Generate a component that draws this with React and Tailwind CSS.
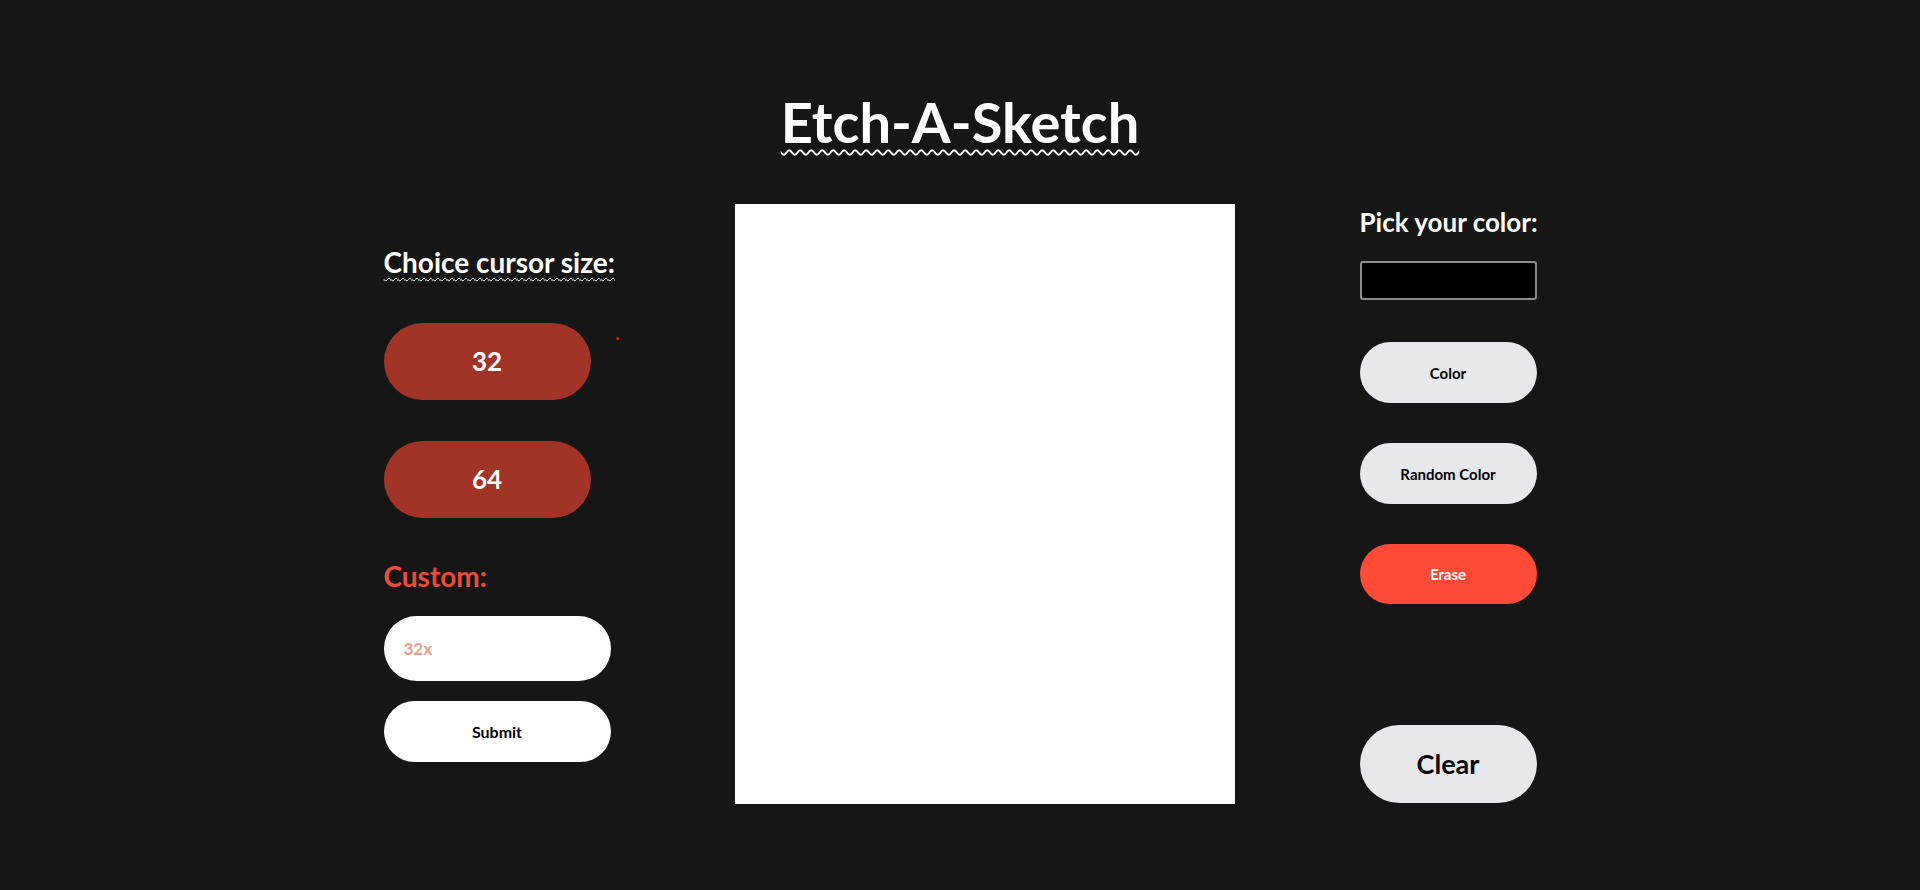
import React, { useState } from 'react';

const font = { fontFamily: 'Lato, "Open Sans", sans-serif' };

export default function App() {
  const [custom, setCustom] = useState('');

  return (
    <div className="min-h-screen bg-[#161616] flex flex-col items-center text-white" style={font}>
      <h1 className="mt-[88px] text-[56px] font-bold leading-[1.2] underline decoration-wavy decoration-white decoration-2 underline-offset-[6px]">
        Etch-A-Sketch
      </h1>

      <div className="mt-[46px] flex items-start justify-center">
        {/* Left controls */}
        <div className="relative w-[227px] pt-[45px] flex flex-col">
          <h2 className="text-[28px] font-bold leading-[1.2] underline decoration-wavy decoration-white decoration-1 underline-offset-[4px] whitespace-nowrap">
            Choice cursor size:
          </h2>
          <span className="absolute left-[232px] top-[136px] h-[3px] w-[3px] rounded-full bg-[#e0241b]" />
          <button className="mt-[43px] h-[77px] w-[207px] rounded-full bg-[#a23327] text-[26px] font-bold text-white">
            32
          </button>
          <button className="mt-[41px] h-[77px] w-[207px] rounded-full bg-[#a23327] text-[26px] font-bold text-white">
            64
          </button>
          <h2 className="mt-[42px] text-[28px] font-bold leading-[1.2] text-[#f04a38]">Custom:</h2>
          <input
            value={custom}
            onChange={(e) => setCustom(e.target.value)}
            placeholder="32x"
            className="mt-[23px] h-[65px] w-[227px] rounded-full bg-white px-[20px] text-[17px] font-bold text-black outline-none placeholder:text-[#f29a8a]"
          />
          <button className="mt-[20px] h-[61px] w-[227px] rounded-full bg-white text-[16px] font-bold text-black">
            Submit
          </button>
        </div>

        {/* Board */}
        <div className="ml-[124px] mt-[3px] h-[600px] w-[500px] bg-white" />

        {/* Right controls */}
        <div className="ml-[125px] w-[177px] pt-[6px] flex flex-col">
          <h2 className="text-[26px] font-bold leading-[1.2] whitespace-nowrap">Pick your color:</h2>
          <div className="mt-[23px] h-[39px] w-[177px] rounded-[3px] border-2 border-[#8c8c8c] bg-black" />
          <button className="mt-[42px] h-[61px] w-[177px] rounded-full bg-[#e8e7ec] text-[15px] font-bold text-black">
            Color
          </button>
          <button className="mt-[40px] h-[61px] w-[177px] rounded-full bg-[#e8e7ec] text-[15px] font-bold text-black">
            Random Color
          </button>
          <button className="mt-[40px] h-[60px] w-[177px] rounded-full bg-[#ff4a35] text-[15px] font-bold text-white">
            Erase
          </button>
          <button className="mt-[121px] h-[78px] w-[177px] rounded-full bg-[#e8e7ec] text-[27px] font-bold text-black">
            Clear
          </button>
        </div>
      </div>
    </div>
  );
}
